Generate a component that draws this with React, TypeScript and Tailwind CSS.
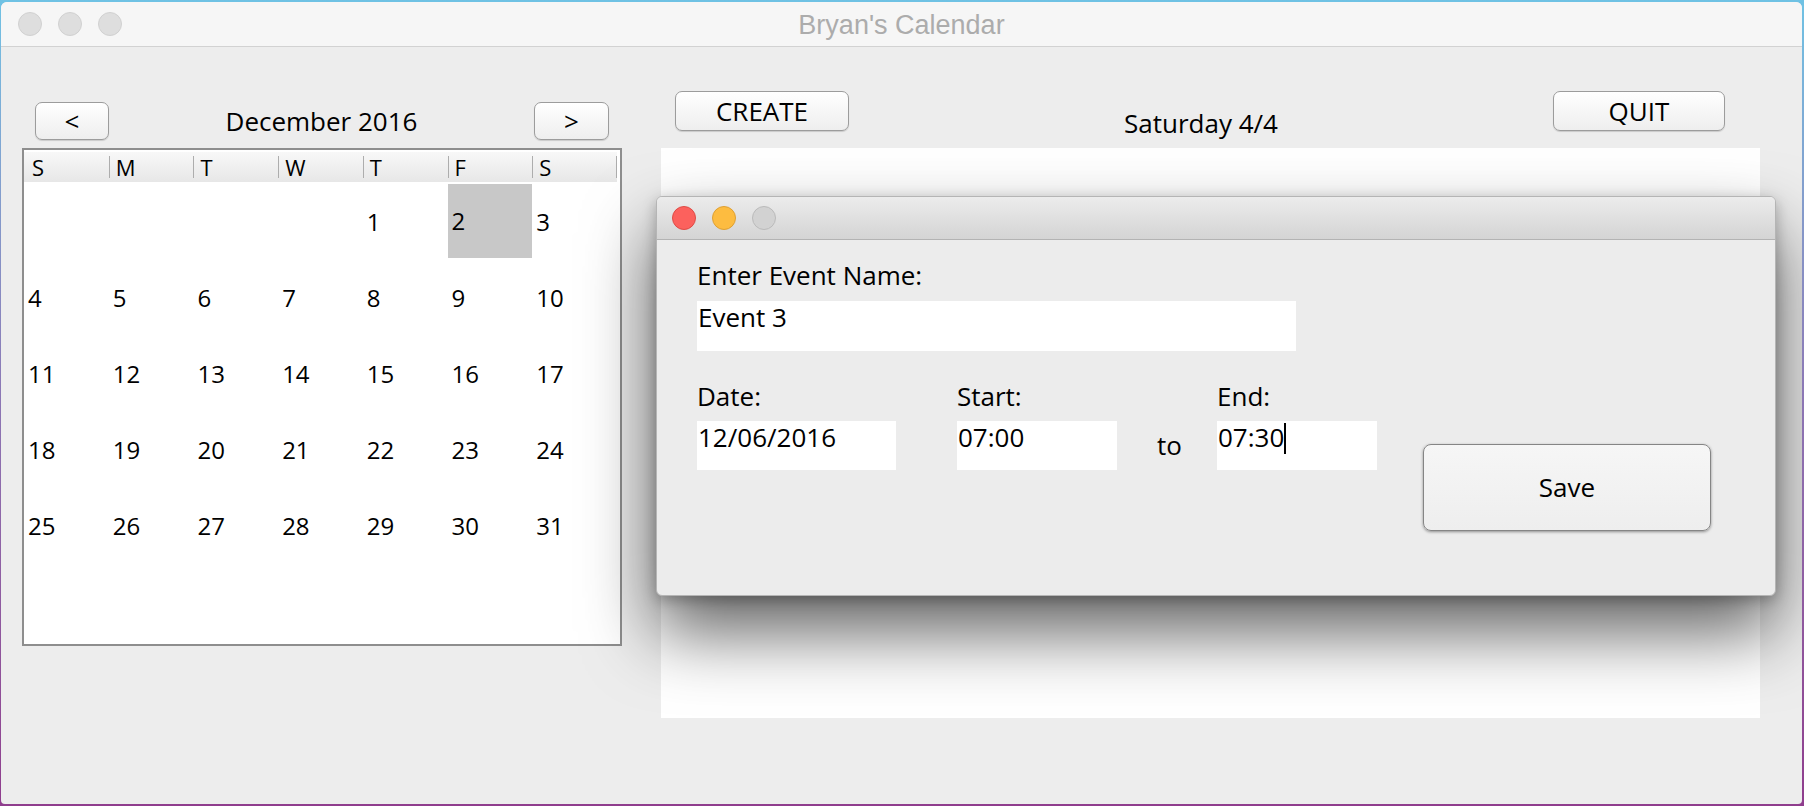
import React from 'react';

// 12월 2016 달력 데이터 (목요일 시작)
const weekDays = ['S', 'M', 'T', 'W', 'T', 'F', 'S'];

const buildWeeks = () => {
  const cells: (number | null)[] = [];
  for (let i = 0; i < 4; i++) cells.push(null);
  for (let d = 1; d <= 31; d++) cells.push(d);
  while (cells.length < 42) cells.push(null);
  const weeks: (number | null)[][] = [];
  for (let w = 0; w < 6; w++) weeks.push(cells.slice(w * 7, w * 7 + 7));
  return weeks;
};

const weeks = buildWeeks();
const selectedDay = 2;

function AquaButton({ label, className }: { label: string; className: string }) {
  return (
    <button
      type="button"
      className={`flex items-center justify-center rounded-[7px] border border-[#9c9c9c] bg-linear-to-b from-[#ffffff] to-[#eeeeee] text-[26px] leading-[35px] text-black shadow-[0_1px_1px_rgba(0,0,0,0.15)] ${className}`}
    >
      {label}
    </button>
  );
}

function MonthCalendar() {
  return (
    <div className="flex w-[600px] flex-col pt-[55px]">
      <div className="flex h-[38px] items-center justify-between px-[13px]">
        <AquaButton label="<" className="h-[38px] w-[74px]" />
        <div className="text-[26px] leading-[35px] text-black">December 2016</div>
        <AquaButton label=">" className="h-[38px] w-[75px]" />
      </div>

      <div className="mt-[8px] h-[498px] border-2 border-[#8e8e8e] bg-white">
        {/* 요일 헤더 */}
        <div className="mt-[2px] grid h-[30px] w-[593px] grid-cols-7 bg-linear-to-b from-[#f8f8f8] to-[#e7e7e7]">
          {weekDays.map((d, i) => (
            <div key={i} className="flex items-center">
              {i > 0 && <div className="h-[22px] w-px bg-[#adadad]" />}
              <span className={`text-[22px] leading-[30px] text-black ${i === 0 ? 'pl-[8px]' : 'pl-[6px]'}`}>{d}</span>
              {i === 6 && <div className="ml-auto h-[22px] w-px bg-[#adadad]" />}
            </div>
          ))}
        </div>

        <div className="mt-[2px] flex w-[593px] flex-col">
          {weeks.map((week, w) => (
            <div key={w} className="grid h-[76px] grid-cols-7">
              {week.map((day, i) => (
                <div
                  key={i}
                  className={`flex items-center pl-[4px] text-[24px] leading-[32px] text-black ${
                    day === selectedDay ? 'h-[74px] bg-[#c8c8c8]' : ''
                  }`}
                >
                  {day ?? ''}
                </div>
              ))}
            </div>
          ))}
        </div>
      </div>
    </div>
  );
}

function DayPanel() {
  return (
    <div className="ml-[39px] flex w-[1099px] flex-col pt-[44px]">
      <div className="flex h-[40px] items-start pl-[14px] pr-[35px]">
        <AquaButton label="CREATE" className="h-[40px] w-[174px]" />
        <div className="mt-[15px] flex-1 text-center text-[26px] leading-[35px] text-black">Saturday 4/4</div>
        <AquaButton label="QUIT" className="h-[40px] w-[172px]" />
      </div>
      <div className="mt-[17px] h-[570px] bg-white" />
    </div>
  );
}

function TrafficLight({ color, border }: { color: string; border: string }) {
  return <div className={`h-[24px] w-[24px] rounded-full border ${color} ${border}`} />;
}

function EventDialog() {
  return (
    <div className="absolute left-[655px] top-[194px] flex h-[400px] w-[1120px] flex-col overflow-hidden rounded-[6px] border border-[#b5b5b5] bg-[#ececec] shadow-[0_36px_70px_rgba(0,0,0,0.62),0_4px_14px_rgba(0,0,0,0.25)]">
      <div className="flex h-[43px] shrink-0 items-center gap-[16px] border-b border-[#b3b3b3] bg-linear-to-b from-[#ececec] to-[#d4d4d4] pl-[15px]">
        <TrafficLight color="bg-[#fc615d]" border="border-[#de4c46]" />
        <TrafficLight color="bg-[#fdbc40]" border="border-[#dea034]" />
        <TrafficLight color="bg-[#d2d2d2]" border="border-[#bababa]" />
      </div>

      <div className="flex flex-col pl-[40px] pt-[18px]">
        <div className="text-[26px] leading-[35px] text-black">Enter Event Name:</div>
        <div className="mt-[8px] h-[50px] w-[599px] bg-white pl-[1px] text-[26px] leading-[33px] text-black">Event 3</div>

        <div className="mt-[28px] flex items-start">
          <div className="flex w-[199px] flex-col">
            <div className="text-[26px] leading-[35px] text-black">Date:</div>
            <div className="mt-[7px] h-[49px] bg-white pl-[1px] text-[26px] leading-[33px] text-black">12/06/2016</div>
          </div>

          <div className="ml-[61px] flex w-[160px] flex-col">
            <div className="text-[26px] leading-[35px] text-black">Start:</div>
            <div className="mt-[7px] h-[49px] bg-white pl-[1px] text-[26px] leading-[33px] text-black">07:00</div>
          </div>

          <div className="mt-[49px] w-[100px] pl-[40px] text-[26px] leading-[35px] text-black">to</div>

          <div className="flex w-[160px] flex-col">
            <div className="text-[26px] leading-[35px] text-black">End:</div>
            <div className="mt-[7px] flex h-[49px] items-start bg-white pl-[1px] text-[26px] leading-[33px] text-black">
              <span>07:30</span>
              <span className="mt-[2px] h-[31px] w-[2px] bg-black" />
            </div>
          </div>

          <button
            type="button"
            className="ml-[46px] mt-[65px] flex h-[87px] w-[288px] items-center justify-center rounded-[8px] border border-[#858585] bg-linear-to-b from-[#f6f6f6] to-[#eeeeee] text-[26px] leading-[35px] text-black shadow-[0_1px_3px_rgba(0,0,0,0.4)]"
          >
            Save
          </button>
        </div>
      </div>
    </div>
  );
}

export default function App() {
  return (
    <div className="h-[806px] w-[1804px] overflow-hidden bg-linear-to-b from-[#6fc2e4] via-[#8c76b4] to-[#8f3d8d] pb-[2px] pl-[1px] pr-[2px] pt-[2px] font-['Open_Sans',sans-serif]">
      <div className="relative flex h-full w-full flex-col overflow-hidden rounded-t-[6px] rounded-b-[4px] bg-[#ededed]">
        {/* 창 타이틀 바 */}
        <div className="relative flex h-[45px] shrink-0 items-center gap-[16px] border-b border-[#d2d2d2] bg-[#f6f6f6] pl-[17px]">
          <div className="h-[24px] w-[24px] rounded-full border border-[#d1d1d1] bg-[#dedede]" />
          <div className="h-[24px] w-[24px] rounded-full border border-[#d1d1d1] bg-[#dedede]" />
          <div className="h-[24px] w-[24px] rounded-full border border-[#d1d1d1] bg-[#dedede]" />
          <div className="pointer-events-none absolute inset-x-0 top-0 flex h-full items-center justify-center pt-[2px] font-['Liberation_Sans',sans-serif] text-[27px] text-[#acacac]">
            Bryan&apos;s Calendar
          </div>
        </div>

        <div className="flex pl-[21px]">
          <MonthCalendar />
          <DayPanel />
        </div>

        <EventDialog />
      </div>
    </div>
  );
}
